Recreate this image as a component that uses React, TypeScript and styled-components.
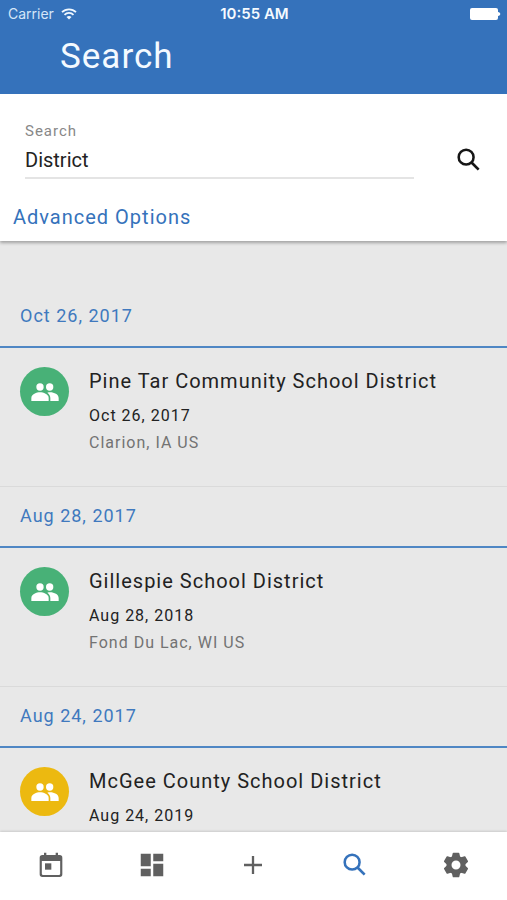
import React, { useState } from "react";
import styled, { createGlobalStyle } from "styled-components";
import { MdDashboard } from "react-icons/md";

const BLUE = "#3572bb";

const GlobalStyle = createGlobalStyle`
  * { box-sizing: border-box; }
  body { margin: 0; font-family: Roboto, "Liberation Sans", sans-serif; color: #222; }
  h1, h2, h3, p, ul { margin: 0; padding: 0; font-weight: 400; }
  button, input { font-family: inherit; }
`;

const Screen = styled.div`
  display: flex;
  flex-direction: column;
  height: 100vh;
  background: #e8e8e8;
  overflow: hidden;
`;

const Header = styled.header`
  flex: none;
  background: ${BLUE};
  color: #f4faff;
  padding-bottom: 16px;
`;

const StatusBar = styled.div`
  display: grid;
  grid-template-columns: 1fr auto 1fr;
  align-items: center;
  height: 28px;
  padding: 0 6px 0 8px;
  font-family: Inter, sans-serif;
  font-size: 14px;
  line-height: 16px;
`;

const Carrier = styled.span`
  display: flex;
  align-items: center;
  gap: 7px;
  color: #d5e6f8;
`;

const Clock = styled.span`
  font-size: 15px;
  font-weight: 600;
`;

const BatterySlot = styled.span`
  display: flex;
  justify-content: flex-end;
`;

const Title = styled.h1`
  padding: 7px 60px 0;
  font-size: 35px;
  line-height: 43px;
  letter-spacing: 1px;
`;

const SearchPanel = styled.form`
  flex: none;
  z-index: 1;
  background: #fff;
  padding-top: 27px;
  box-shadow: 0 2px 3px rgba(0, 0, 0, 0.3);
  clip-path: inset(0 0 -8px 0);
`;

const SearchRow = styled.div`
  display: flex;
  align-items: center;
  padding: 0 19px 0 25px;
`;

const Field = styled.div`
  display: flex;
  flex: 1;
  min-width: 0;
  flex-direction: column;
  margin-right: 34px;
  border-bottom: 2px solid #e4e4e4;
`;

const FieldLabel = styled.label`
  font-size: 15px;
  line-height: 18px;
  letter-spacing: 1px;
  color: #888;
`;

const FieldInput = styled.input`
  width: 100%;
  height: 37px;
  padding: 4px 0 0;
  border: 0;
  outline: 0;
  background: transparent;
  font-size: 20px;
  color: #222;
`;

const IconButton = styled.button`
  display: grid;
  place-items: center;
  width: 40px;
  height: 40px;
  margin-top: 18px;
  padding: 0;
  border: 0;
  background: none;
  color: #161616;
`;

const AdvancedButton = styled.button`
  margin: 17px 0 0;
  padding: 6px 13px 9px;
  border: 0;
  background: none;
  color: ${BLUE};
  font-size: 20px;
  line-height: 30px;
  letter-spacing: 1px;
`;

const Results = styled.main`
  flex: 1;
  min-height: 0;
  padding-top: 46px;
  overflow-y: auto;
  scrollbar-width: none;
`;

const DateHeading = styled.h2`
  height: 61px;
  padding: 15px 20px 0;
  border-bottom: 2px solid #4f87c4;
  color: #4079be;
  font-size: 18px;
  line-height: 28px;
  letter-spacing: 1px;
`;

const Item = styled.article`
  display: flex;
  gap: 20px;
  min-height: 139px;
  padding: 19px 20px;
  border-bottom: 1px solid #dadada;
`;

const Avatar = styled.span<{ $color: string }>`
  display: grid;
  flex: none;
  place-items: center;
  width: 49px;
  height: 49px;
  border-radius: 50%;
  background: ${(p) => p.$color};
  color: #fff;
`;

const Name = styled.h3`
  margin-bottom: 7px;
  font-size: 20px;
  line-height: 28px;
  letter-spacing: 1px;
`;

const Detail = styled.p<{ $muted?: boolean }>`
  font-size: 16px;
  line-height: 27px;
  letter-spacing: 1px;
  color: ${(p) => (p.$muted ? "#737373" : "#222")};
`;

const TabBar = styled.nav`
  display: grid;
  grid-template-columns: repeat(5, 1fr);
  flex: none;
  z-index: 1;
  height: 68px;
  background: #fff;
  box-shadow: 0 -1px 2px rgba(0, 0, 0, 0.12);
`;

const Tab = styled.button<{ $active?: boolean }>`
  display: grid;
  place-items: center;
  padding: 0 0 3px;
  border: 0;
  background: none;
  color: ${(p) => (p.$active ? BLUE : "#606060")};
  font-size: 30px;
`;

const GREEN = "#48b177";
const AMBER = "#ecb910";

const WifiIcon = () => (
  <svg width="16" height="12" viewBox="0 0 16 12" fill="none" stroke="#f0f8ff" strokeWidth="1.8" aria-hidden="true">
    <path d="M1 4.2a10 10 0 0 1 14 0M3.5 6.8a6.4 6.4 0 0 1 9 0" />
    <path d="M8 11.6 5.5 9.1a3.6 3.6 0 0 1 5 0z" fill="#f0f8ff" stroke="none" />
  </svg>
);

const BatteryIcon = () => (
  <svg width="31" height="12" viewBox="0 0 31 12" fill="#fff" aria-hidden="true">
    <rect x="0" y="0" width="28" height="12" rx="2" />
    <path d="M28 4c3 .4 3 3.600 0 4z" />
  </svg>
);

const SearchIcon = () => (
  <svg width="23" height="23" viewBox="0 0 68 68" fill="none" stroke="currentColor" aria-hidden="true">
    <circle cx="27" cy="27" r="22" strokeWidth="7.500" />
    <path d="M43 43 64 64" strokeWidth="8" />
  </svg>
);

const PeopleIcon = () => (
  <svg width="28" height="18" viewBox="0 0 84 54" fill="currentColor" aria-hidden="true">
    <circle cx="27" cy="12" r="11" />
    <circle cx="56" cy="12" r="11" />
    <path d="M1 54v-9c0-11 16-17 26-17s26 6 26 17v9z" />
    <path d="M58 54v-9c0-7-4-12-9-16 14-4 34 3 34 16v9z" />
  </svg>
);

const CalendarIcon = () => (
  <svg width="24" height="26" viewBox="0 0 72 78" fill="currentColor" aria-hidden="true">
    <path
      fillRule="evenodd"
      d="M15 2h7v7h28V2h7v7h5q8 0 8 8v50q0 8-8 8H10q-8 0-8-8V17q0-8 8-8h5zM8.500 27v38q0 4 4 4h47q4 0 4-4V27z"
    />
    <rect x="18" y="34" width="19" height="19" />
  </svg>
);

const PlusIcon = () => (
  <svg width="18" height="18" viewBox="0 0 18 18" stroke="currentColor" strokeWidth="2.300" aria-hidden="true">
    <path d="M9 0v18M0 9h18" />
  </svg>
);

const GearIcon = () => (
  <svg width="26" height="26" viewBox="-13 -13 26 26" fill="none" stroke="currentColor" aria-hidden="true">
    <circle r="7" strokeWidth="5" />
    {[0, 60, 120, 180, 240, 300].map((angle) => (
      <path
        key={angle}
        transform={`rotate(${angle})`}
        d="M-4.300-7.500-3.300-11.700q.1-.6.700-.6h5.200q.6 0 .7.600L4.300-7.500z"
        fill="currentColor"
        stroke="none"
      />
    ))}
  </svg>
);

const results = [
  { group: "Oct 26, 2017", name: "Pine Tar Community School District", date: "Oct 26, 2017", place: "Clarion, IA US", color: GREEN },
  { group: "Aug 28, 2017", name: "Gillespie School District", date: "Aug 28, 2018", place: "Fond Du Lac, WI US", color: GREEN },
  { group: "Aug 24, 2017", name: "McGee County School District", date: "Aug 24, 2019", place: "", color: AMBER },
];

const tabs = [
  { label: "Calendar", Icon: CalendarIcon },
  { label: "Dashboard", Icon: MdDashboard },
  { label: "Add", Icon: PlusIcon },
  { label: "Search", Icon: SearchIcon },
  { label: "Settings", Icon: GearIcon },
];

export default function App() {
  const [query, setQuery] = useState("District");
  const [active, setActive] = useState("Search");

  return (
    <>
      <GlobalStyle />
      <Screen>
        <Header>
          <StatusBar>
            <Carrier>Carrier <WifiIcon /></Carrier>
            <Clock>10:55 AM</Clock>
            <BatterySlot><BatteryIcon /></BatterySlot>
          </StatusBar>
          <Title>Search</Title>
        </Header>
        <SearchPanel onSubmit={(e) => e.preventDefault()}>
          <SearchRow>
            <Field>
              <FieldLabel htmlFor="query">Search</FieldLabel>
              <FieldInput id="query" value={query} onChange={(e) => setQuery(e.target.value)} />
            </Field>
            <IconButton type="submit" aria-label="Search"><SearchIcon /></IconButton>
          </SearchRow>
          <AdvancedButton type="button">Advanced Options</AdvancedButton>
        </SearchPanel>
        <Results>
          {results.map((r) => (
            <section key={r.name}>
              <DateHeading>{r.group}</DateHeading>
              <Item>
                <Avatar $color={r.color}><PeopleIcon /></Avatar>
                <div>
                  <Name>{r.name}</Name>
                  <Detail>{r.date}</Detail>
                  {r.place && <Detail $muted>{r.place}</Detail>}
                </div>
              </Item>
            </section>
          ))}
        </Results>
        <TabBar>
          {tabs.map(({ label, Icon }) => (
            <Tab key={label} type="button" aria-label={label} $active={label === active} onClick={() => setActive(label)}>
              <Icon />
            </Tab>
          ))}
        </TabBar>
      </Screen>
    </>
  );
}
